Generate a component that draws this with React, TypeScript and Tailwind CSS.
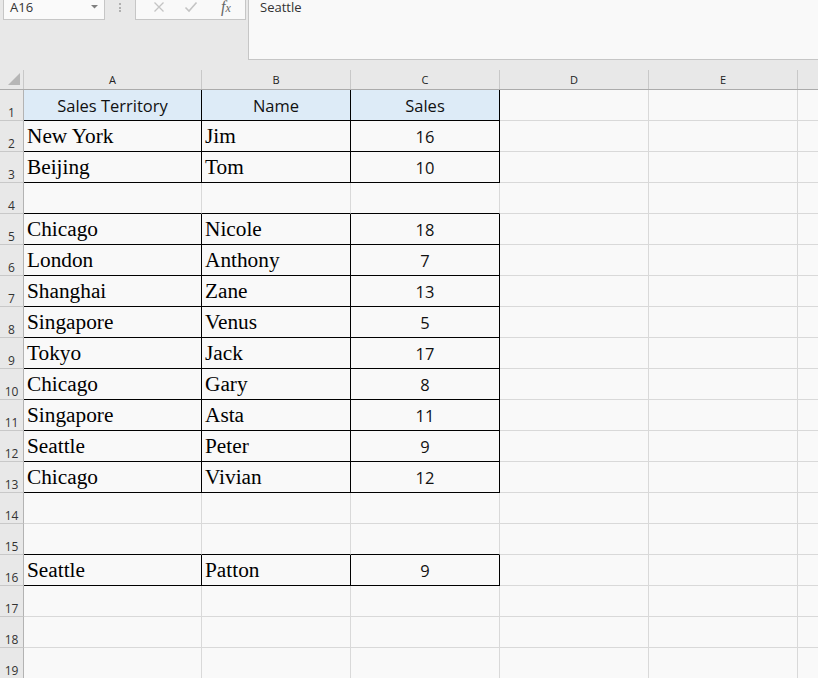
import React from 'react';

type Row = { a?: string; b?: string; c?: string; boxed?: boolean; head?: boolean };

const rows: Row[] = [
  { a: 'Sales Territory', b: 'Name', c: 'Sales', boxed: true, head: true },
  { a: 'New York', b: 'Jim', c: '16', boxed: true },
  { a: 'Beijing', b: 'Tom', c: '10', boxed: true },
  {},
  { a: 'Chicago', b: 'Nicole', c: '18', boxed: true },
  { a: 'London', b: 'Anthony', c: '7', boxed: true },
  { a: 'Shanghai', b: 'Zane', c: '13', boxed: true },
  { a: 'Singapore', b: 'Venus', c: '5', boxed: true },
  { a: 'Tokyo', b: 'Jack', c: '17', boxed: true },
  { a: 'Chicago', b: 'Gary', c: '8', boxed: true },
  { a: 'Singapore', b: 'Asta', c: '11', boxed: true },
  { a: 'Seattle', b: 'Peter', c: '9', boxed: true },
  { a: 'Chicago', b: 'Vivian', c: '12', boxed: true },
  {},
  {},
  { a: 'Seattle', b: 'Patton', c: '9', boxed: true },
  {},
  {},
  {},
];

const sans = "font-['Open_Sans','Noto_Sans',sans-serif]";
const ui = "font-['Open_Sans','Noto_Sans',sans-serif]";

// one cell of the boxed table (columns A to C)
const TableCell = ({
  width,
  text,
  kind,
  boxed,
  nextBoxed,
  head,
}: {
  width: string;
  text?: string;
  kind: 'serif' | 'num';
  boxed?: boolean;
  nextBoxed?: boolean;
  head?: boolean;
}) => {
  const right = boxed ? 'border-r-black' : 'border-r-[#d9d9d9]';
  const bottom = boxed || nextBoxed ? 'border-b-black' : 'border-b-[#d9d9d9]';
  const bg = head ? 'bg-[#ddebf7]' : 'bg-[#f9f9f9]';
  let textCls = '';
  if (head || kind === 'num') {
    textCls = `${sans} text-[16.5px] leading-[26px] pt-[3px] text-center text-[#111]`;
  } else {
    textCls = "font-['Liberation_Serif','Times_New_Roman',serif] text-[21.3px] leading-[29px] pt-[1px] pl-[3px] text-black";
  }
  return (
    <div className={`${width} h-[31px] shrink-0 border-r border-b ${right} ${bottom} ${bg} ${textCls} overflow-hidden whitespace-nowrap`}>
      {text}
    </div>
  );
};

const FormulaBar = () => (
  <div className="flex h-[60px] pl-[3px]">
    <div className="w-[102px] h-[20px] border-l border-r border-b border-[#c6c6c6] bg-[#fafafa] flex items-start justify-between pl-[6px] pr-[5px]">
      <div className={`${ui} text-[13px] leading-[14px] text-[#333]`}>A16</div>
      <svg width="8" height="4" viewBox="0 0 8 4" className="mt-[5px]">
        <polygon points="0,0 7,0 3.5,3.5" fill="#808080" />
      </svg>
    </div>
    <div className="w-[30px] flex flex-col items-center pt-[3px] gap-[1.5px]">
      <span className="w-[2px] h-[2px] bg-[#b0b0b0]" />
      <span className="w-[2px] h-[2px] bg-[#b0b0b0]" />
      <span className="w-[2px] h-[2px] bg-[#b0b0b0]" />
    </div>
    <div className="w-[111px] h-[20px] border-l border-r border-b border-[#c6c6c6] bg-[#f9f9f9] relative">
      <svg width="12" height="12" viewBox="0 0 12 12" className="absolute left-[17px] top-[1px]">
        <path d="M1.5 1.5 L10.5 10.5 M10.5 1.5 L1.5 10.5" stroke="#c4c4c4" strokeWidth="1.3" />
      </svg>
      <svg width="14" height="12" viewBox="0 0 14 12" className="absolute left-[48px] top-[1px]">
        <path d="M1.5 6.5 L5 10 L12.5 1.5" stroke="#c4c4c4" strokeWidth="1.6" fill="none" />
      </svg>
      <div className="absolute left-[85px] top-[0px] font-['Liberation_Serif',serif] italic text-[16px] leading-[14px] text-[#666]">
        f<span className="text-[12px]">x</span>
      </div>
    </div>
    <div className="ml-[2px] flex-1 h-[60px] border-l border-b border-[#c6c6c6] bg-[#f9f9f9] pl-[11px]">
      <div className={`${ui} text-[13px] leading-[14px] text-[#333]`}>Seattle</div>
    </div>
  </div>
);

const ColumnHeader = () => {
  const letters = ['A', 'B', 'C', 'D', 'E'];
  const widths = ['w-[178px]', 'w-[149px]', 'w-[149px]', 'w-[149px]', 'w-[149px]'];
  return (
    <div className="flex h-[20px] border-b border-[#ababab] mt-[10px]">
      <div className="w-[24px] shrink-0 border-r border-[#c8c8c8] relative">
        <svg width="14" height="14" viewBox="0 0 14 14" className="absolute left-[7px] top-[3px]">
          <polygon points="13,0 13,12 1,12" fill="#b6b6b6" />
        </svg>
      </div>
      {letters.map((l, i) => (
        <div
          key={l}
          className={`${widths[i]} shrink-0 border-r border-[#c8c8c8] ${ui} text-[11px] leading-[19px] text-center text-[#222]`}
        >
          {l}
        </div>
      ))}
      <div className="flex-1" />
    </div>
  );
};

export default function App() {
  return (
    <div className="w-[818px] h-[678px] overflow-hidden bg-[#e8e8e8]">
      <FormulaBar />
      <ColumnHeader />
      {rows.map((r, i) => {
        const next = rows[i + 1];
        const nextBoxed = next?.boxed;
        return (
          <div key={i} className="flex h-[31px]">
            <div
              className={`w-[24px] shrink-0 h-[31px] border-r border-r-[#b3b3b3] border-b border-b-[#c8c8c8] bg-[#e8e8e8] flex items-end justify-center pb-[1px] ${ui} text-[12px] leading-[12px] text-[#333]`}
            >
              {i + 1}
            </div>
            <TableCell width="w-[178px]" text={r.a} kind="serif" boxed={r.boxed} nextBoxed={nextBoxed} head={r.head} />
            <TableCell width="w-[149px]" text={r.b} kind="serif" boxed={r.boxed} nextBoxed={nextBoxed} head={r.head} />
            <TableCell width="w-[149px]" text={r.c} kind="num" boxed={r.boxed} nextBoxed={nextBoxed} head={r.head} />
            <div className="w-[149px] shrink-0 h-[31px] border-r border-r-[#d9d9d9] border-b border-b-[#d9d9d9] bg-[#f9f9f9]" />
            <div className="w-[149px] shrink-0 h-[31px] border-r border-r-[#d9d9d9] border-b border-b-[#d9d9d9] bg-[#f9f9f9]" />
            <div className="flex-1 h-[31px] border-b border-b-[#d9d9d9] bg-[#f9f9f9]" />
          </div>
        );
      })}
    </div>
  );
}
